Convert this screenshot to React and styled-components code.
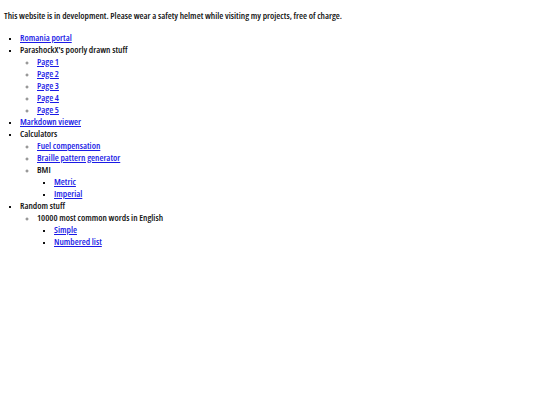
import React from 'react';
import styled, { createGlobalStyle } from 'styled-components';

const GlobalStyle = createGlobalStyle`
    body {
        margin: 0;
        padding: 0 4px;
        background: #ffffff;
        color: #111111;
        font-family: "Open Sans", "Liberation Sans", sans-serif;
        font-stretch: 75%;
        font-weight: 600;
        font-size: 9.2px;
        line-height: 12px;
    }
`;

const Notice = styled.p`
    margin: 10px 0;
`;

const List = styled.ul`
    margin: ${(props) => (props.nested ? '0' : '10px 0')};
    padding-left: ${(props) => (props.nested ? '17px' : '16px')};
    list-style-type: ${(props) => props.bullet || 'disc'};
`;

const Item = styled.li`
    line-height: 12px;

    &::marker {
        font-size: 7px;
        color: ${(props) => (props.light ? '#777777' : '#111111')};
    }
`;

const Link = styled.a`
    color: #1a1ae6;
    text-decoration: underline;
`;

const App = () => {
    return (
        <>
            <GlobalStyle />
            <Notice>
                This website is in development. Please wear a safety helmet while visiting my projects, free of charge.
            </Notice>
            <List bullet="square">
                <Item><Link href="#">Romania portal</Link></Item>
                <Item>
                    ParashockX's poorly drawn stuff
                    <List nested bullet="circle">
                        <Item light><Link href="#">Page 1</Link></Item>
                        <Item light><Link href="#">Page 2</Link></Item>
                        <Item light><Link href="#">Page 3</Link></Item>
                        <Item light><Link href="#">Page 4</Link></Item>
                        <Item light><Link href="#">Page 5</Link></Item>
                    </List>
                </Item>
                <Item><Link href="#">Markdown viewer</Link></Item>
                <Item>
                    Calculators
                    <List nested bullet="circle">
                        <Item light><Link href="#">Fuel compensation</Link></Item>
                        <Item light><Link href="#">Braille pattern generator</Link></Item>
                        <Item light>
                            BMI
                            <List nested bullet="square">
                                <Item><Link href="#">Metric</Link></Item>
                                <Item><Link href="#">Imperial</Link></Item>
                            </List>
                        </Item>
                    </List>
                </Item>
                <Item>
                    Random stuff
                    <List nested bullet="circle">
                        <Item light>
                            10000 most common words in English
                            <List nested bullet="square">
                                <Item><Link href="#">Simple</Link></Item>
                                <Item><Link href="#">Numbered list</Link></Item>
                            </List>
                        </Item>
                    </List>
                </Item>
            </List>
        </>
    );
};

export default App;
